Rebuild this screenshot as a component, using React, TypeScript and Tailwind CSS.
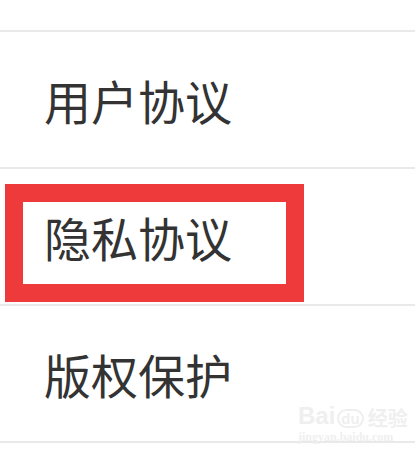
const items = ['用户协议', '隐私协议', '版权保护'];

export default function App() {
  return (
    <div
      className="relative w-[415px] h-[458px] bg-white overflow-hidden pt-[30px]"
      style={{ fontFamily: '"Noto Sans CJK SC", "Noto Sans", sans-serif' }}
    >
      {items.map((label, i) => (
        <div
          key={label}
          className="relative h-[137px] border-t-2 border-[#e9e9e9] flex items-center pl-[44px]"
        >
          <span className="text-[47px] leading-none text-[#333333] font-normal">{label}</span>
          {i === 1 && (
            <div className="absolute left-[5px] top-[15px] w-[299px] h-[118px] border-[18px] border-[#ee3a3a]" />
          )}
        </div>
      ))}
      <div className="border-t-2 border-[#e9e9e9]" />

      {/* watermark */}
      <div className="absolute left-[298px] top-[404px] flex flex-col items-start text-[#efefef] leading-none">
        <div className="flex items-end gap-[2px]">
          <span className="text-[24px] font-bold" style={{ fontFamily: '"Liberation Sans", sans-serif' }}>Bai</span>
          <span className="text-[15px] font-bold rounded-full border-2 border-[#efefef] px-[2px]" style={{ fontFamily: '"Liberation Sans", sans-serif' }}>du</span>
          <span className="text-[20px] font-bold ml-[2px]">经验</span>
        </div>
        <span className="text-[12px] font-bold mt-[3px]" style={{ fontFamily: '"Liberation Serif", serif' }}>jingyan.baidu.com</span>
      </div>
    </div>
  );
}
